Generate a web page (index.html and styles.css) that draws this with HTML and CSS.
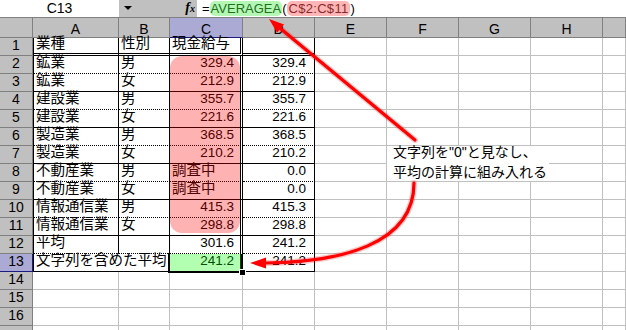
FILE: index.html
```html
<!DOCTYPE html>
<html lang="ja">
<head>
<meta charset="utf-8">
<title>AVERAGEA</title>
<link rel="stylesheet" href="styles.css">
</head>
<body>
<div class="app">
  <div class="fbar">
    <div class="namebox">C13</div>
    <div class="fbtns"><span class="dd"></span><span class="fx"><i>f</i><span class="x">x</span></span></div>
    <div class="formula">=<span class="hl-g">AVERAGEA</span>(<span class="hl-p">C$2:C$11</span>)</div>
  </div>
  <div class="sheet">
    <div class="h"></div><div class="h">A</div><div class="h">B</div><div class="h sel">C</div><div class="h">D</div><div class="h">E</div><div class="h">F</div><div class="h">G</div><div class="h">H</div><div class="h"></div>

    <div class="r">1</div><div class="ca bd">業種</div><div class="cb bd">性別</div><div class="cc bd">現金給与</div><div class="cd bd"></div><div></div><div></div><div></div><div></div><div></div>

    <div class="r">2</div><div class="ca bt">鉱業</div><div class="cb bt">男</div><div class="cc bt n">329.4</div><div class="cd bt n">329.4</div><div></div><div></div><div></div><div></div><div></div>
    <div class="r">3</div><div class="ca bs">鉱業</div><div class="cb bs">女</div><div class="cc bs n">212.9</div><div class="cd bs n">212.9</div><div></div><div></div><div></div><div></div><div></div>
    <div class="r">4</div><div class="ca bt">建設業</div><div class="cb bt">男</div><div class="cc bt n">355.7</div><div class="cd bt n">355.7</div><div></div><div></div><div></div><div></div><div></div>
    <div class="r">5</div><div class="ca bs">建設業</div><div class="cb bs">女</div><div class="cc bs n">221.6</div><div class="cd bs n">221.6</div><div></div><div></div><div></div><div></div><div></div>
    <div class="r">6</div><div class="ca bt">製造業</div><div class="cb bt">男</div><div class="cc bt n">368.5</div><div class="cd bt n">368.5</div><div></div><div></div><div></div><div></div><div></div>
    <div class="r">7</div><div class="ca bs">製造業</div><div class="cb bs">女</div><div class="cc bs n">210.2</div><div class="cd bs n">210.2</div><div></div><div></div><div></div><div></div><div></div>
    <div class="r">8</div><div class="ca bt">不動産業</div><div class="cb bt">男</div><div class="cc bt">調査中</div><div class="cd bt n">0.0</div><div></div><div></div><div></div><div></div><div></div>
    <div class="r">9</div><div class="ca bs">不動産業</div><div class="cb bs">女</div><div class="cc bs">調査中</div><div class="cd bs n">0.0</div><div></div><div></div><div></div><div></div><div></div>
    <div class="r">10</div><div class="ca bt">情報通信業</div><div class="cb bt">男</div><div class="cc bt n">415.3</div><div class="cd bt n">415.3</div><div></div><div></div><div></div><div></div><div></div>
    <div class="r">11</div><div class="ca bs">情報通信業</div><div class="cb bs">女</div><div class="cc bs n">298.8</div><div class="cd bs n">298.8</div><div></div><div></div><div></div><div></div><div></div>
    <div class="r">12</div><div class="ca bt">平均</div><div class="cb bt"></div><div class="cc bt n">301.6</div><div class="cd bt n">241.2</div><div></div><div></div><div></div><div></div><div></div>
    <div class="r sel">13</div><div class="ca cb bs span2">文字列を含めた平均</div><div class="cc bs n">241.2</div><div class="cd bs n">241.2</div><div></div><div></div><div></div><div></div><div></div>

    <div class="r">14</div><div></div><div></div><div></div><div></div><div></div><div></div><div></div><div></div><div></div>
    <div class="r">15</div><div></div><div></div><div></div><div></div><div></div><div></div><div></div><div></div><div></div>
    <div class="r">16</div><div></div><div></div><div></div><div></div><div></div><div></div><div></div><div></div><div></div>
    <div class="r"></div><div></div><div></div><div></div><div></div><div></div><div></div><div></div><div></div><div></div>
  </div>

  <div class="pink"></div>
  <div class="selbox"><div class="green"></div><div class="handle"></div></div>

  <div class="note">
    <div class="note-text">
      <div>文字列を&quot;0&quot;と見なし、</div>
      <div>平均の計算に組み入れる</div>
    </div>
  </div>

  <svg class="arrows" width="626" height="330" viewBox="0 0 626 330">
    <g stroke="#ff0000" fill="none" stroke-linecap="round">
      <path d="M415 140 L281 29" stroke-width="6" stroke-opacity="0.22"/>
      <path d="M415 140 L281 29" stroke-width="3.2"/>
      <path d="M414 183 C414 245 340 262 266 263" stroke-width="6" stroke-opacity="0.22"/>
      <path d="M414 183 C414 245 340 262 266 263" stroke-width="3.2"/>
    </g>
    <polygon points="269,19 284.1,24.4 277.1,32.8" fill="#ff0000"/>
    <polygon points="250,263 266,257.5 266,268.5" fill="#ff0000"/>
  </svg>
</div>
</body>
</html>
```

FILE: styles.css
```css
body {
  margin: 0;
  background: #fff;
  font-family: "Liberation Sans", "Noto Sans CJK JP", sans-serif;
  color: #000;
}

.app {
  position: relative;
  width: 626px;
  height: 330px;
  overflow: hidden;
}

/* formula bar */
.fbar {
  display: flex;
  height: 17px;
  border-bottom: 1px solid #808080;
  line-height: 17px;
}

.namebox {
  width: 119px;
  text-align: center;
  font-size: 14px;
}

.fbtns {
  width: 78px;
  box-sizing: border-box;
  background: #c0c0c0;
  display: flex;
  align-items: center;
  justify-content: space-between;
  padding: 0 2px 0 5px;
}

.dd {
  width: 0;
  height: 0;
  border-left: 4px solid transparent;
  border-right: 4px solid transparent;
  border-top: 4px solid #000;
  margin-top: -2px;
}

.fx {
  font-family: "Liberation Serif", serif;
  font-style: italic;
  font-weight: bold;
  font-size: 14px;
  line-height: 14px;
}

.fx .x {
  font-size: 10px;
}

.formula {
  display: flex;
  align-items: center;
  padding-left: 5px;
  font-size: 13px;
}

.hl-g {
  background: #b4f7b4;
  color: #1f6f1f;
  border-radius: 5px;
  line-height: 15px;
  padding: 0 1px;
}

.hl-p {
  background: #ffb6b6;
  color: #8a2b2b;
  border-radius: 5px;
  line-height: 15px;
  padding: 0 2px;
  letter-spacing: 0.3px;
}

/* sheet grid */
.sheet {
  display: grid;
  grid-template-columns: 33px 86px 51px 73px 72px 72px 72px 72px 72px 23px;
  grid-template-rows: 20px repeat(17, 18px);
}

:where(.sheet) > div {
  box-sizing: border-box;
  border-right: 1px solid #c0c0c0;
  border-bottom: 1px solid #c0c0c0;
  display: flex;
  align-items: center;
  white-space: nowrap;
  font-size: 14.5px;
  line-height: 17px;
  padding: 0 2px 4px 2px;
}

.h {
  background: #c0c0c0;
  border-right-color: #808080;
  border-bottom-color: #808080;
  justify-content: center;
  font-size: 14px;
  padding: 3px 0 0 0;
}

.h.sel {
  background: #aaaad4;
  border-bottom-color: #1c1c80;
}

.r {
  background: #c0c0c0;
  border-right-color: #808080;
  border-bottom-color: #808080;
  justify-content: center;
  font-size: 14px;
  padding: 0 0 3px 0;
}

.r.sel {
  background: #aaaad4;
  border-right-color: #1c1c80;
  border-bottom-color: #1c1c80;
}

/* table borders */
.ca {
  border-left: 1px solid #000;
  border-right-color: #000;
}

.cb {
  border-right-color: #000;
}

.cc {
  border-right: 3px double #000;
}

.cd {
  border-right-color: #000;
}

.bd {
  border-bottom: 3px double #000;
}

.bt {
  border-bottom: 1px dotted #000;
}

.bs {
  border-bottom-color: #000;
}

.span2 {
  grid-column: span 2;
}

.n {
  justify-content: flex-end;
  font-size: 13.5px;
  padding-right: 8px;
}

.cc.n {
  padding-right: 6px;
}

/* overlays */
.pink {
  position: absolute;
  left: 170px;
  top: 56px;
  width: 70px;
  height: 177px;
  background: rgba(255, 0, 0, 0.3);
  border-radius: 12px;
}

.selbox {
  position: absolute;
  left: 168px;
  top: 253px;
  width: 75px;
  height: 20px;
  box-sizing: border-box;
  border: 2px solid #000;
  border-top: 1px dotted #000;
}

.green {
  position: absolute;
  inset: 0;
  background: rgba(0, 255, 0, 0.3);
}

.handle {
  position: absolute;
  right: -5px;
  bottom: -5px;
  width: 5px;
  height: 5px;
  background: #000;
  border: 1px solid #fff;
}

.note {
  position: absolute;
  left: 387px;
  top: 146px;
  width: 162px;
  height: 35px;
  background: #fff;
  font-size: 14px;
  line-height: 20px;
  padding-left: 6px;
  box-sizing: border-box;
}

.note-text {
  margin-top: -4px;
}

.arrows {
  position: absolute;
  left: 0;
  top: 0;
}
```
